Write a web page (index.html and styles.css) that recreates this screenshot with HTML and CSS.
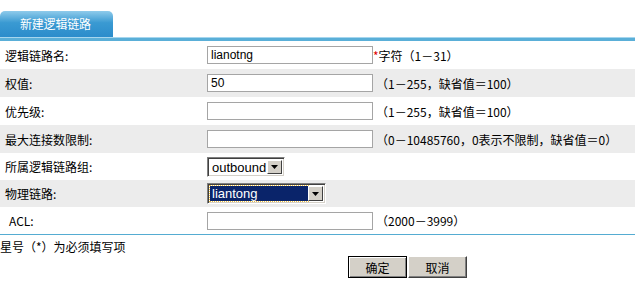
FILE: index.html
```html
<!DOCTYPE html>
<html lang="zh-CN">
<head>
    <meta charset="UTF-8">
    <title>新建逻辑链路</title>
    <link rel="stylesheet" href="styles.css">
</head>
<body>
    <div class="tab-bar">
        <div class="tab">新建逻辑链路</div>
    </div>
    <div class="tab-line"></div>

    <div class="form">
        <div class="row">
            <div class="label">逻辑链路名:</div>
            <input class="text-input" type="text" value="lianotng">
            <span class="hint hint-tight"><span class="req">*</span>字符（1－31）</span>
        </div>
        <div class="row alt">
            <div class="label">权值:</div>
            <input class="text-input" type="text" value="50">
            <span class="hint">（1－255，缺省值＝100）</span>
        </div>
        <div class="row">
            <div class="label">优先级:</div>
            <input class="text-input" type="text" value="">
            <span class="hint">（1－255，缺省值＝100）</span>
        </div>
        <div class="row alt">
            <div class="label">最大连接数限制:</div>
            <input class="text-input" type="text" value="">
            <span class="hint">（0－10485760，0表示不限制，缺省值＝0）</span>
        </div>
        <div class="row short">
            <div class="label">所属逻辑链路组:</div>
            <div class="select select-group">
                <span class="select-value">outbound</span>
                <span class="select-arrow"><svg width="7" height="4" viewBox="0 0 7 4"><path d="M0 0H7L3.5 4Z" fill="#000"/></svg></span>
            </div>
        </div>
        <div class="row alt short">
            <div class="label">物理链路:</div>
            <div class="select select-link">
                <span class="select-value selected">liantong</span>
                <span class="select-arrow"><svg width="7" height="4" viewBox="0 0 7 4"><path d="M0 0H7L3.5 4Z" fill="#000"/></svg></span>
            </div>
        </div>
        <div class="row short">
            <div class="label label-acl">ACL:</div>
            <input class="text-input" type="text" value="">
            <span class="hint">（2000－3999）</span>
        </div>
    </div>

    <div class="note">星号（*）为必须填写项</div>

    <div class="actions">
        <button class="btn btn-default">确定</button>
        <button class="btn">取消</button>
    </div>
</body>
</html>
```

FILE: styles.css
```css
/* Basic reset */
* {
    margin: 0;
    padding: 0;
    box-sizing: border-box;
}

body {
    font-family: "Liberation Sans", "Noto Sans CJK SC", sans-serif;
    font-size: 12px;
    color: #000;
    background-color: #fff;
}

/* Tab header */
.tab-bar {
    height: 37px;
    padding-top: 11px;
}

.tab {
    width: 113px;
    height: 26px;
    line-height: 26px;
    padding-left: 20px;
    border-radius: 5px 5px 0 0;
    background: linear-gradient(#8fcbeb, #3a9ad2 45%, #2b8ccb);
    color: #fff;
    font-family: "Noto Sans CJK SC", sans-serif;
    font-size: 12px;
    letter-spacing: -0.2px;
}

.tab-line {
    height: 4px;
    border-top: 1px solid #a6d6ee;
    background-color: #5aafd8;
}

/* Form rows */
.form {
    border-bottom: 1px solid #55acd2;
}

.row {
    display: flex;
    align-items: center;
    height: 28px;
}

.row.short {
    height: 27px;
}

.row.alt {
    background-color: #ececec;
}

.label {
    width: 207px;
    padding-left: 5px;
    font-family: "Noto Sans CJK SC", sans-serif;
    font-size: 12px;
}

.label-acl {
    padding-left: 9px;
}

.text-input {
    width: 166px;
    height: 18px;
    padding: 0 3px;
    border: 1px solid #a5a5a5;
    font-family: "Liberation Sans", sans-serif;
    font-size: 12px;
    color: #000;
    outline: none;
    background-color: #fff;
}

.hint {
    padding-left: 3px;
    font-family: "Noto Sans CJK SC", sans-serif;
    font-size: 12px;
}

.hint-tight {
    padding-left: 0;
}

.req {
    color: #e00000;
}

/* Classic drop-down boxes */
.select {
    display: flex;
    align-items: stretch;
    height: 20px;
    border-top: 1px solid #808080;
    border-left: 1px solid #808080;
    border-bottom: 1px solid #fff;
    border-right: 1px solid #fff;
    box-shadow: inset 1px 1px 0 #404040, inset -1px -1px 0 #d4d0c8;
    background-color: #fff;
    padding: 2px;
}

.select-group {
    width: 78px;
    margin-top: 1px;
}

.select-link {
    width: 119px;
    height: 21px;
}

.select-value {
    flex: 1;
    line-height: 15px;
    padding-left: 2px;
    font-family: "Liberation Sans", sans-serif;
    font-size: 13px;
}

.select-value.selected {
    background-color: #0a246a;
    color: #fff;
    outline: 1px dotted #f0c040;
}

.select-arrow {
    width: 15px;
    display: flex;
    align-items: center;
    justify-content: center;
    background-color: #d4d0c8;
    border-top: 1px solid #fff;
    border-left: 1px solid #fff;
    border-right: 1px solid #404040;
    border-bottom: 1px solid #404040;
}

/* Footer */
.note {
    padding-top: 3px;
    height: 21px;
    font-family: "Noto Sans CJK SC", sans-serif;
    font-size: 12px;
}

.actions {
    display: flex;
    padding-left: 348px;
    gap: 1px;
}

.btn {
    width: 59px;
    height: 22px;
    background-color: #d4d0c8;
    border-top: 1px solid #fff;
    border-left: 1px solid #fff;
    border-right: 1px solid #404040;
    border-bottom: 1px solid #404040;
    box-shadow: inset -1px -1px 0 #808080;
    font-family: "Noto Sans CJK SC", sans-serif;
    font-size: 12px;
    color: #000;
}

.btn-default {
    border: 1px solid #000;
    box-shadow: inset 1px 1px 0 #fff, inset -1px -1px 0 #808080;
}
```
